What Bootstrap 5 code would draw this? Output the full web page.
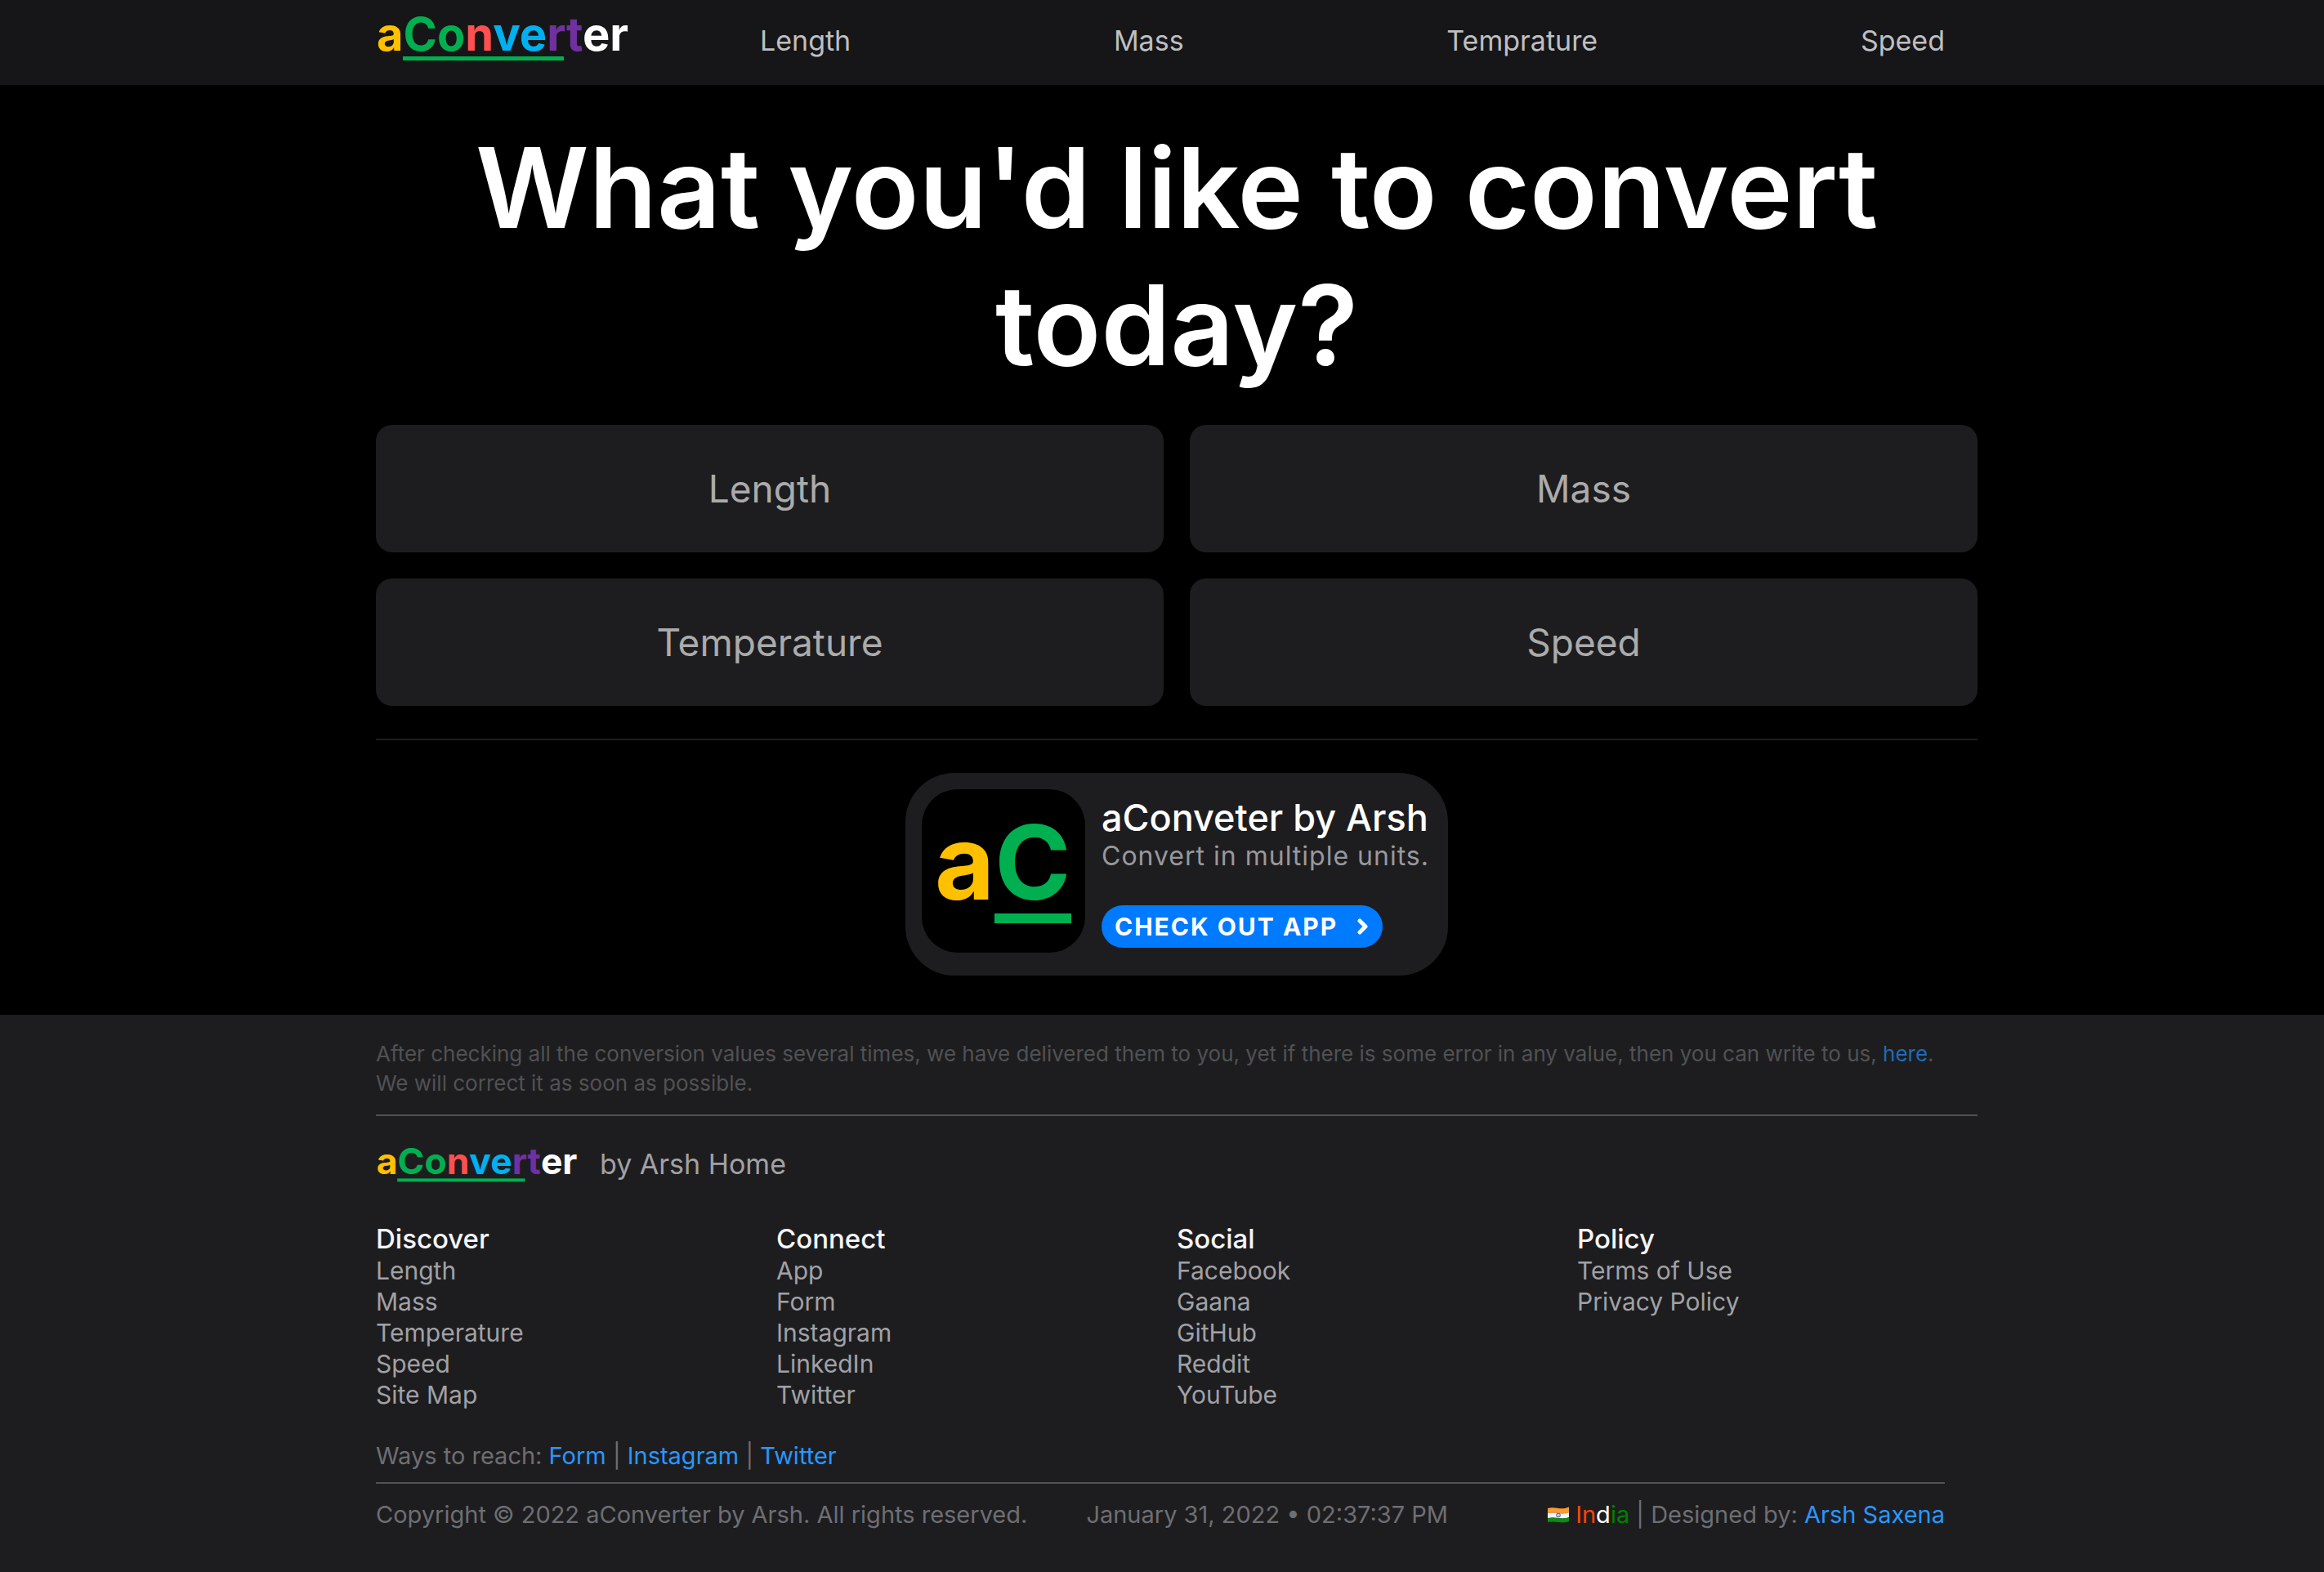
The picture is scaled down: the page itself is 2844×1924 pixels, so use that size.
<!DOCTYPE html>
<html lang="en">
<head>
<meta charset="utf-8">
<meta name="viewport" content="width=device-width, initial-scale=1">
<title>aConverter</title>
<link href="https://cdn.jsdelivr.net/npm/bootstrap@5.3.0/dist/css/bootstrap.min.css" rel="stylesheet">
<style>
  body { font-family: Inter, "Liberation Sans", sans-serif; background: #000; color: #fff; }
  a { text-decoration: none; }
  .wrap { width: 100%; max-width: 1996px; margin: 0 auto; padding-left: 36px; }
  .inset { padding-right: 40px; }
  .logo { overflow: visible; }
  .logo-text { font-family: Inter, "Liberation Sans", sans-serif; font-weight: 700; font-size: 56px; }

  .topbar { background: #161618; }
  .topbar .logo { width: 310px; height: 64px; margin-top: 12px; }
  .topbar ul { margin-left: 160px; padding-bottom: 4px; }
  .topbar ul a { color: #bfbfc1; font-size: 34px; line-height: 100px; }

  .headline { font-size: 136px; font-weight: 600; line-height: 168px; padding: 42px 0 38px; }
  .tiles { --bs-gutter-x: 32px; --bs-gutter-y: 32px; }
  .tile { height: 156px; border-radius: 20px; background: #1d1d1f; color: #ababab; font-size: 46px; }
  .tile:hover { color: #fff; }
  .rule { height: 2px; margin: 0; border: 0; opacity: 1; background: #515154; }
  .rule-dark { margin: 40px 0; background: #1d1d1f; }

  .promo { width: 664px; max-width: 100%; gap: 20px; padding: 20px 12px 28px 20px; margin: 0 auto 48px; border-radius: 60px; background: #1d1d1f; }
  .promo-icon { width: 200px; height: 200px; flex: none; }
  .promo-icon text { font-size: 126px; }
  .promo-title { font-size: 45px; font-weight: 500; line-height: 54px; margin-top: 8px; }
  .promo-sub { font-size: 32px; line-height: 40px; letter-spacing: 1px; color: #98989d; margin-bottom: 40px; }
  .promo-btn { width: 344px; height: 52px; padding: 0 16px; border-radius: 26px; background: #007aff; color: #fff; font-size: 30px; font-weight: 700; letter-spacing: 2px; }
  .promo-btn:hover { background: #0a84ff; color: #fff; }

  .site-footer { background: #1d1d1f; padding: 30px 0 52px; }
  .notice { font-size: 26px; line-height: 36px; color: #515154; margin-bottom: 20px; }
  .notice a { color: #1f6bb8; }
  .brand-line { gap: 28px; margin-top: 31px; margin-bottom: 43px; font-size: 34px; line-height: 56px; color: #a1a1a6; }
  .brand-line .logo { width: 246px; height: 51px; }
  .links h2 { font-size: 33px; font-weight: 500; line-height: 40px; margin: 0; color: #f5f5f7; }
  .links a { font-size: 30px; line-height: 38px; color: #a1a1a6; }
  .fine { font-size: 29px; line-height: 36px; color: #6e6e73; }
  .fine a { color: #2997ff; }
  .reach { margin-top: 38px; margin-bottom: 14px; }
  .legal { margin-top: 20px; }
  .clock { margin-left: 72px; }
  .flag { width: 26px; height: 20px; vertical-align: 0; }
  .c-saffron { color: #ff4500; }
  .c-green { color: #008000; }
</style>
</head>
<body class="d-flex flex-column min-vh-100">

<header class="topbar">
  <nav class="wrap" aria-label="Main">
    <div class="d-flex align-items-start inset">
      <a href="#" aria-label="aConverter home" class="d-flex">
        <svg class="logo" viewBox="0 0 310 64">
          <text class="logo-text" x="1" y="50"><tspan fill="#ffc000">a</tspan><tspan fill="#00b050">Co</tspan><tspan fill="#ff5050">n</tspan><tspan fill="#00b0f0">ve</tspan><tspan fill="#7030a0">rt</tspan><tspan fill="#fff">er</tspan></text>
          <rect x="33" y="57" width="197" height="5" fill="#00b050"/>
        </svg>
      </a>
      <ul class="list-unstyled d-flex justify-content-between flex-fill mb-0">
        <li><a href="#length">Length</a></li>
        <li><a href="#mass">Mass</a></li>
        <li><a href="#temperature">Temprature</a></li>
        <li><a href="#speed">Speed</a></li>
      </ul>
    </div>
  </nav>
</header>

<main class="wrap">
  <h1 class="headline text-center mb-0">What you'd like to convert today?</h1>
  <div class="row tiles">
    <div class="col-6"><a id="length" href="#length" class="tile d-flex align-items-center justify-content-center">Length</a></div>
    <div class="col-6"><a id="mass" href="#mass" class="tile d-flex align-items-center justify-content-center">Mass</a></div>
    <div class="col-6"><a id="temperature" href="#temperature" class="tile d-flex align-items-center justify-content-center">Temperature</a></div>
    <div class="col-6"><a id="speed" href="#speed" class="tile d-flex align-items-center justify-content-center">Speed</a></div>
  </div>
  <hr class="rule rule-dark">
  <section class="promo d-flex align-items-start">
    <svg class="promo-icon" viewBox="0 0 200 200" aria-hidden="true">
      <rect width="200" height="200" rx="44" fill="#000"/>
      <text class="logo-text" x="16" y="135"><tspan fill="#ffc000">a</tspan><tspan fill="#00b050">C</tspan></text>
      <rect x="89" y="152" width="94" height="12" fill="#00b050"/>
    </svg>
    <div>
      <h2 class="promo-title mb-0 text-nowrap">aConveter by Arsh</h2>
      <p class="promo-sub text-nowrap">Convert in multiple units.</p>
      <a href="#app" class="promo-btn d-flex align-items-center justify-content-between text-nowrap">CHECK OUT APP
        <svg width="16" height="20" viewBox="0 0 16 20" fill="none" stroke="#fff" stroke-width="5" stroke-linecap="round" stroke-linejoin="round" aria-hidden="true"><path d="M4 3l7 7-7 7"/></svg>
      </a>
    </div>
  </section>
</main>

<footer class="site-footer flex-grow-1">
  <div class="wrap">
    <p class="notice">After checking all the conversion values several times, we have delivered them to you, yet if there is some error in any value, then you can write to us, <a href="#write">here</a>.<br>We will correct it as soon as possible.</p>
    <hr class="rule">
    <div class="brand-line d-flex align-items-start">
      <svg class="logo" viewBox="0 0 310 64" role="img" aria-label="aConverter">
        <text class="logo-text" x="1" y="50"><tspan fill="#ffc000">a</tspan><tspan fill="#00b050">Co</tspan><tspan fill="#ff5050">n</tspan><tspan fill="#00b0f0">ve</tspan><tspan fill="#7030a0">rt</tspan><tspan fill="#fff">er</tspan></text>
        <rect x="33" y="57" width="197" height="5" fill="#00b050"/>
      </svg>
      <span>by Arsh Home</span>
    </div>
    <div class="row g-0 links">
      <div class="col-3 d-flex flex-column align-items-start">
        <h2>Discover</h2>
        <a href="#">Length</a><a href="#">Mass</a><a href="#">Temperature</a><a href="#">Speed</a><a href="#">Site Map</a>
      </div>
      <div class="col-3 d-flex flex-column align-items-start">
        <h2>Connect</h2>
        <a href="#">App</a><a href="#">Form</a><a href="#">Instagram</a><a href="#">LinkedIn</a><a href="#">Twitter</a>
      </div>
      <div class="col-3 d-flex flex-column align-items-start">
        <h2>Social</h2>
        <a href="#">Facebook</a><a href="#">Gaana</a><a href="#">GitHub</a><a href="#">Reddit</a><a href="#">YouTube</a>
      </div>
      <div class="col-3 d-flex flex-column align-items-start">
        <h2>Policy</h2>
        <a href="#">Terms of Use</a><a href="#">Privacy Policy</a>
      </div>
    </div>
    <div class="inset fine">
      <p class="reach">Ways to reach: <a href="#">Form</a> | <a href="#">Instagram</a> | <a href="#">Twitter</a></p>
      <hr class="rule">
      <div class="legal d-flex">
        <span>Copyright © 2022 aConverter by Arsh. All rights reserved.</span>
        <span class="clock">January 31, 2022 • 02:37:37 PM</span>
        <span class="ms-auto"><svg class="flag" viewBox="0 0 26 20" aria-hidden="true"><path d="M0 2c5-1.500 9-.5 13 0s8 .5 13-1.500v6.500c-5 2-9 1.500-13 1S5 7 0 8z" fill="#ff9a33"/><path d="M0 8c5-1 9-.5 13 0s8 1 13-1v6c-5 2-9 1.500-13 1s-8-1-13 0z" fill="#f4f4f4"/><path d="M0 14c5-1 9-.5 13 0s8 1 13-1v5c-5 2-9 1.500-13 1s-8-1-13 0z" fill="#0f8a12"/><circle cx="13" cy="10.500" r="2.400" fill="#c9cbe6" stroke="#4a4fa8" stroke-width="1"/></svg> <span class="c-saffron">In</span><span class="text-white">d</span><span class="c-green">ia</span> | Designed by: <a href="#">Arsh Saxena</a></span>
      </div>
    </div>
  </div>
</footer>

<script src="https://cdn.jsdelivr.net/npm/bootstrap@5.3.0/dist/js/bootstrap.bundle.min.js"></script>
</body>
</html>
